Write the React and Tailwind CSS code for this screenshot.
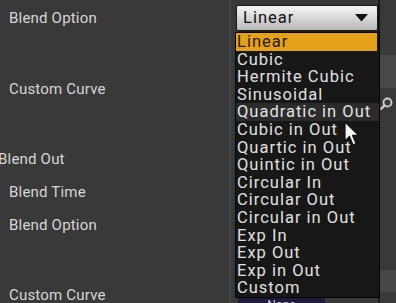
const options = [
  "Linear",
  "Cubic",
  "Hermite Cubic",
  "Sinusoidal",
  "Quadratic in Out",
  "Cubic in Out",
  "Quartic in Out",
  "Quintic in Out",
  "Circular In",
  "Circular Out",
  "Circular in Out",
  "Exp In",
  "Exp Out",
  "Exp in Out",
  "Custom",
];

function Label({ children, className = "" }) {
  return (
    <div
      className={`shrink-0 flex items-center whitespace-nowrap text-[15px] tracking-[0.2px] text-[#d6d6d6] ${className}`}
    >
      {children}
    </div>
  );
}

function Cursor() {
  return (
    <svg width="16" height="26" viewBox="0 0 16 26" className="absolute left-[344px] top-[121px]">
      <path
        d="M1 1 L1 20 L5.5 15.5 L9 24 L12 22.6 L8.6 14.4 L14.6 14.4 Z"
        fill="#f4f4f4"
        stroke="#111"
        strokeWidth="1.2"
        strokeLinejoin="round"
      />
    </svg>
  );
}

export default function App() {
  return (
    <div className="relative w-[396px] h-[303px] overflow-hidden bg-[#393939] font-['Roboto',sans-serif]">
      <div className="flex h-full">
        {/* labels */}
        <div className="w-[229px] shrink-0 flex flex-col">
          <Label className="h-[36px] pl-[9px]">Blend Option</Label>
          <div className="h-[35px] shrink-0" />
          <Label className="h-[36px] pl-[9px]">Custom Curve</Label>
          <div className="h-[36px] shrink-0" />
          <Label className="h-[33px] -ml-[2px]">Blend Out</Label>
          <Label className="h-[33px] pl-[9px]">Blend Time</Label>
          <Label className="h-[33px] pl-[9px]">Blend Option</Label>
          <div className="h-[37px] shrink-0" />
          <Label className="h-[33px] pl-[9px]">Custom Curve</Label>
        </div>
        <div className="w-[2px] shrink-0 bg-[#454545]" />
        {/* values column */}
        <div className="flex-1 flex flex-col items-end">
          <div className="h-[55px] shrink-0" />
          <div className="h-[33px] shrink-0 w-[120px] bg-[#484848]" />
          <div className="h-[30px] shrink-0 w-[120px] flex items-center justify-end pr-[3px]">
            <svg width="13" height="13" viewBox="0 0 13 13">
              <circle cx="7.5" cy="5.5" r="4" fill="none" stroke="#cfcfcf" strokeWidth="1.8" />
              <path d="M4.6 8.4 L1.2 11.8" stroke="#cfcfcf" strokeWidth="2.2" strokeLinecap="round" />
            </svg>
          </div>
          <div className="h-[152px] shrink-0" />
          <div className="h-[22px] shrink-0 w-[120px] bg-[#474747]" />
          <div className="flex-1 w-full flex">
            <div className="ml-[7px] w-[87px] bg-[#1f1b3b] flex justify-center text-[12px] text-[#c8c8d8] leading-[14px] pt-[6px]">
              None
            </div>
          </div>
        </div>
      </div>

      {/* splitter line */}
      <div className="absolute left-[378px] top-0 h-full w-[2px] bg-[#1b1b1b]" />

      {/* dropdown header */}
      <div className="absolute left-[236px] top-[5px] w-[142px] h-[26px] rounded-[2px] border border-[#1a1a1a] bg-gradient-to-b from-[#f6f6f6] to-[#b9b9b9] flex items-center justify-between pl-[6px] pr-[9px] shadow-[1px_1px_2px_rgba(0,0,0,0.6)]">
        <span className="text-[16.5px] tracking-[1px] text-[#121212] leading-none">Linear</span>
        <svg width="13" height="8" viewBox="0 0 13 8">
          <path d="M0 0 L13 0 L6.5 7.5 Z" fill="#111" />
        </svg>
      </div>

      {/* dropdown list */}
      <div className="absolute left-[235px] top-[32px] w-[145px] border border-[#050505] bg-[#171717]">
        {options.map((o, i) => (
          <div
            key={o}
            className={`h-[17.6px] overflow-hidden pl-[1px] text-[16.5px] tracking-[1px] leading-[17.6px] whitespace-nowrap ${
              i === 0
                ? "bg-[#e5a11b] text-[#2a1800] mr-[2px]"
                : i === 4
                ? "bg-[#2b2b2b] text-[#e2e2e2]"
                : "text-[#e0e0e0]"
            }`}
          >
            {o}
          </div>
        ))}
      </div>

      <Cursor />
    </div>
  );
}
